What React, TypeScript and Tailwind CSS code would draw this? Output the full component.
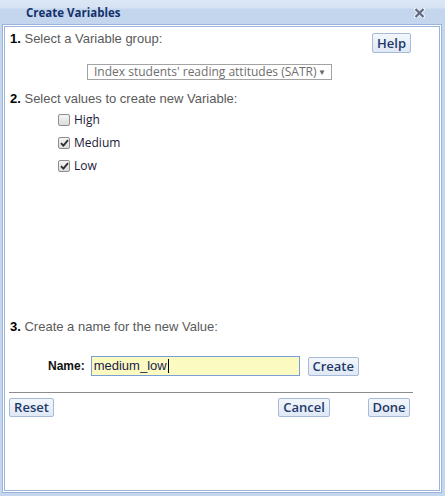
import React from "react";

const btn =
  "flex items-center justify-center border border-[#a7bad7] rounded-[2px] bg-[linear-gradient(to_bottom,#f3f7fc,#dfe8f5)] text-[#1f3968] font-semibold text-[13px] leading-none [font-family:'Open_Sans',sans-serif]";

function Check({ checked }: { checked: boolean }) {
  return (
    <div className="w-[12px] h-[12px] border border-[#8e8e8e] rounded-[2px] bg-[linear-gradient(to_bottom,#f4f4f4,#dcdcdc)] flex items-center justify-center">
      {checked && (
        <svg width="9" height="8" viewBox="0 0 9 8">
          <path d="M1 4.2 L3.4 6.6 L8 1.2" fill="none" stroke="#2f2f2f" strokeWidth="1.9" />
        </svg>
      )}
    </div>
  );
}

export default function App() {
  const items = [
    { label: "High", checked: false },
    { label: "Medium", checked: true },
    { label: "Low", checked: true },
  ];
  return (
    <div className="w-[445px] h-[496px] bg-[#c5d7ee] flex flex-col [font-family:'Liberation_Sans',Arial,sans-serif]">
      <div className="h-[24px] shrink-0 flex items-center bg-[linear-gradient(to_bottom,#dce7f5_0px,#d6e2f3_8px,#c4d6ee_9px,#c4d6ee_100%)]">
        <div className="ml-[26px] mt-[2px] text-[11.5px] font-bold text-[#15316b] [font-family:'Open_Sans',sans-serif]">
          Create Variables
        </div>
        <div className="ml-auto mr-[20px] mt-[1px]">
          <svg width="11" height="10" viewBox="0 0 11 10">
            <path d="M1.5 1 L9.5 9 M9.5 1 L1.5 9" stroke="#f4f7fb" strokeWidth="4" strokeLinecap="square" />
            <path d="M1.5 1 L9.5 9 M9.5 1 L1.5 9" stroke="#5e6b83" strokeWidth="2.4" />
          </svg>
        </div>
      </div>
      <div className="ml-[2px] w-[440px] h-[469px] border-[3px] border-double border-[#9db4da] bg-white">
        <div className="pt-[4px] px-[5px]">
          <div className="flex justify-between h-[22px]">
            <div className="text-[13px] leading-[15px] text-[#5a5a5a]">
              <span className="font-bold text-black">1.</span> Select a Variable group:
            </div>
            <div className={btn + " mt-[2px] mr-[23px] w-[39px] h-[20px]"}>Help</div>
          </div>
          <div className="mt-[11px] ml-[77px] w-[245px] h-[16px] border border-[#a3a3a3] flex items-center pl-[6px] pr-[5px] text-[12px] text-[#6e6e6e] [font-family:'Open_Sans',sans-serif]">
            <span className="leading-none">Index students' reading attitudes (SATR)</span>
            <span className="ml-auto text-[8px] text-[#666]">▼</span>
          </div>
          <div className="mt-[11px] text-[13px] leading-[15px] text-[#5a5a5a]">
            <span className="font-bold text-black">2.</span> Select values to create new Variable:
          </div>
          <div className="h-[213px] pt-[2px] pl-[48px]">
            {items.map((it) => (
              <div key={it.label} className="h-[23px] flex items-center">
                <Check checked={it.checked} />
                <span className="ml-[4px] text-[12px] text-[#1a1a3a] [font-family:'Open_Sans',sans-serif]">
                  {it.label}
                </span>
              </div>
            ))}
          </div>
          <div className="text-[13px] leading-[15px] text-[#5a5a5a]">
            <span className="font-bold text-black">3.</span> Create a name for the new Value:
          </div>
          <div className="mt-[22px] ml-[38px] flex items-center h-[20px]">
            <span className="text-[12px] font-bold text-[#111]">Name:</span>
            <div className="ml-[6px] w-[209px] h-[20px] border border-[#7a9fd8] bg-[#fbfbc1] flex items-center pl-[2px] text-[13px] text-[#1b1b4d]">
              <span>medium_low</span>
              <span className="w-[1px] h-[14px] bg-black ml-[1px]"></span>
            </div>
            <div className={btn + " ml-[8px] w-[51px] h-[19px]"}>Create</div>
          </div>
          <div className="mt-[16px] ml-[-1px] w-[404px] h-[1px] bg-[#8c8c8c]"></div>
          <div className="mt-[5px] ml-[-1px] flex">
            <div className={btn + " w-[45px] h-[19px]"}>Reset</div>
            <div className={btn + " ml-[224px] w-[52px] h-[19px]"}>Cancel</div>
            <div className={btn + " ml-[38px] w-[42px] h-[19px]"}>Done</div>
          </div>
        </div>
      </div>
    </div>
  );
}
